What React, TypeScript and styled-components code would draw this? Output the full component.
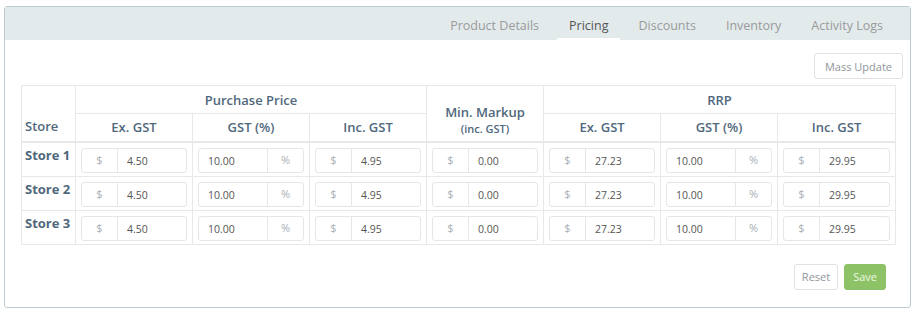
import React from "react";
import styled, { createGlobalStyle } from "styled-components";

const Global = createGlobalStyle`
  html, body { margin: 0; padding: 0; background: #ffffff; }
  body { font-family: "Open Sans", "Lato", sans-serif; }
  * { box-sizing: border-box; }
`;

const Page = styled.div`
  padding: 6px 5px 0 4px;
  width: 916px;
`;

const Panel = styled.div`
  width: 907px;
  height: 302px;
  border: 1px solid #bccbd1;
  border-radius: 3px;
  display: flex;
  flex-direction: column;
`;

const TabBar = styled.div`
  height: 33px;
  background: #e3eaec;
  display: flex;
  justify-content: flex-end;
  align-items: stretch;
  padding-right: 12px;
`;

const Tab = styled.div<{ $active?: boolean }>`
  padding: 6px 12px 0;
  margin: 0 3px;
  display: flex;
  align-items: center;
  font-size: 12.5px;
  color: ${(p) => (p.$active ? "#555" : "#9a9a9a")};
  border-bottom: 2px solid ${(p) => (p.$active ? "#ffffff" : "transparent")};
`;

const Body = styled.div`
  flex: 1;
  display: flex;
  flex-direction: column;
  padding: 13px 7px 0 16px;
`;

const ToolRow = styled.div`
  display: flex;
  justify-content: flex-end;
  margin-bottom: 6px;
`;

const Button = styled.button<{ $primary?: boolean }>`
  height: 26px;
  padding: 0 ${(p) => (p.$primary ? "8px" : "10px")};
  font-family: inherit;
  font-size: 11px;
  border-radius: 3px;
  border: 1px solid ${(p) => (p.$primary ? "#8cc265" : "#e1e1e1")};
  background: ${(p) => (p.$primary ? "#8dc366" : "#ffffff")};
  color: ${(p) => (p.$primary ? "#eef8e6" : "#90959a")};
  cursor: pointer;
`;

const ResetButton = styled(Button)`
  padding: 0 7px;
`;

const Table = styled.table`
  width: 874px;
  border-collapse: collapse;
  table-layout: fixed;
  color: #4f687c;
`;

const Th = styled.th<{ $left?: boolean; $bottom?: boolean; $thick?: boolean }>`
  border: 1px solid #e8e8e8;
  ${(p) => (p.$thick ? "border-bottom: 2px solid #e8e8e8;" : "")}
  font-size: 13px;
  font-weight: 600;
  text-align: ${(p) => (p.$left ? "left" : "center")};
  vertical-align: ${(p) => (p.$left || p.$bottom ? "bottom" : "middle")};
  padding: ${(p) => (p.$left ? "0 3px 6px" : p.$bottom ? "0 4px 5px" : "0 4px")};
  height: 28px;
`;

const SubNote = styled.div`
  font-size: 11px;
  font-weight: 600;
`;

const Td = styled.td`
  border: 1px solid #e8e8e8;
  padding: 5px 5px 3px;
  height: 34px;
  vertical-align: top;
`;

const StoreCell = styled.td`
  border: 1px solid #e8e8e8;
  padding: 3px 3px 0;
  font-size: 13px;
  font-weight: 700;
  vertical-align: top;
  white-space: nowrap;
`;

const InputGroup = styled.div`
  display: flex;
  height: 25px;
  border: 1px solid #e6e6e6;
  border-radius: 3px;
  overflow: hidden;
`;

const Addon = styled.span`
  width: 36px;
  flex: none;
  display: flex;
  align-items: center;
  justify-content: center;
  font-size: 11px;
  color: #a8b0b5;
  padding-bottom: 2px;
`;

const AddonLeft = styled(Addon)`
  border-right: 1px solid #e6e6e6;
`;

const AddonRight = styled(Addon)`
  border-left: 1px solid #e6e6e6;
`;

const Value = styled.span`
  flex: 1;
  display: flex;
  align-items: center;
  padding: 1px 9px 0;
  font-size: 10.5px;
  color: #555;
`;

const Footer = styled.div`
  display: flex;
  justify-content: flex-end;
  gap: 6px;
  margin-top: 19px;
  padding-right: 17px;
`;

type Row = {
  store: string;
  pEx: string;
  pGst: string;
  pInc: string;
  markup: string;
  rEx: string;
  rGst: string;
  rInc: string;
};

const rows: Row[] = [1, 2, 3].map((n) => ({
  store: `Store ${n}`,
  pEx: "4.50",
  pGst: "10.00",
  pInc: "4.95",
  markup: "0.00",
  rEx: "27.23",
  rGst: "10.00",
  rInc: "29.95",
}));

const Dollar = ({ v }: { v: string }) => (
  <InputGroup>
    <AddonLeft>$</AddonLeft>
    <Value>{v}</Value>
  </InputGroup>
);

const Percent = ({ v }: { v: string }) => (
  <InputGroup>
    <Value>{v}</Value>
    <AddonRight>%</AddonRight>
  </InputGroup>
);

export default function App() {
  return (
    <>
      <Global />
      <Page>
        <Panel>
          <TabBar>
            <Tab>Product Details</Tab>
            <Tab $active>Pricing</Tab>
            <Tab>Discounts</Tab>
            <Tab>Inventory</Tab>
            <Tab>Activity Logs</Tab>
          </TabBar>
          <Body>
            <ToolRow>
              <Button>Mass Update</Button>
            </ToolRow>
            <Table>
              <colgroup>
                <col style={{ width: 54 }} />
                <col style={{ width: 117 }} />
                <col style={{ width: 117 }} />
                <col style={{ width: 117 }} />
                <col style={{ width: 117 }} />
                <col style={{ width: 117 }} />
                <col style={{ width: 117 }} />
                <col style={{ width: 118 }} />
              </colgroup>
              <thead>
                <tr>
                  <Th rowSpan={2} $left $thick>
                    Store
                  </Th>
                  <Th colSpan={3}>Purchase Price</Th>
                  <Th rowSpan={2} $bottom $thick>
                    Min. Markup
                    <SubNote>(inc. GST)</SubNote>
                  </Th>
                  <Th colSpan={3}>RRP</Th>
                </tr>
                <tr>
                  <Th $thick>Ex. GST</Th>
                  <Th $thick>GST (%)</Th>
                  <Th $thick>Inc. GST</Th>
                  <Th $thick>Ex. GST</Th>
                  <Th $thick>GST (%)</Th>
                  <Th $thick>Inc. GST</Th>
                </tr>
              </thead>
              <tbody>
                {rows.map((r) => (
                  <tr key={r.store}>
                    <StoreCell>{r.store}</StoreCell>
                    <Td><Dollar v={r.pEx} /></Td>
                    <Td><Percent v={r.pGst} /></Td>
                    <Td><Dollar v={r.pInc} /></Td>
                    <Td><Dollar v={r.markup} /></Td>
                    <Td><Dollar v={r.rEx} /></Td>
                    <Td><Percent v={r.rGst} /></Td>
                    <Td><Dollar v={r.rInc} /></Td>
                  </tr>
                ))}
              </tbody>
            </Table>
            <Footer>
              <ResetButton>Reset</ResetButton>
              <Button $primary>Save</Button>
            </Footer>
          </Body>
        </Panel>
      </Page>
    </>
  );
}
